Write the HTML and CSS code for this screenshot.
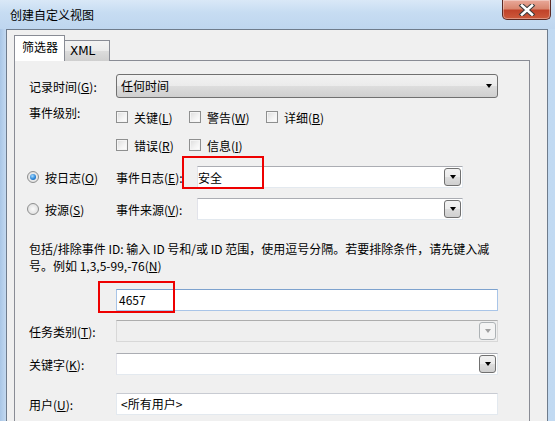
FILE: index.html
```html
<!DOCTYPE html>
<html>
<head>
<meta charset="utf-8">
<link rel="stylesheet" href="styles.css">
</head>
<body>
<div class="window">
  <div class="titlebar">
    <span class="title">创建自定义视图</span>
    <div class="close">
      <svg width="18" height="12" viewBox="0 0 18 12">
        <path d="M4 1.5 L14 10.5 M14 1.5 L4 10.5" stroke="#3a3a3a" stroke-width="4.6" stroke-linecap="square"/>
        <path d="M4 1.5 L14 10.5 M14 1.5 L4 10.5" stroke="#ffffff" stroke-width="2.6" stroke-linecap="square"/>
      </svg>
    </div>
  </div>
  <div class="client">
    <div class="tabs">
      <div class="tab active">筛选器</div>
      <div class="tab">XML</div>
    </div>
    <div class="panel">
      <div class="row r-time">
        <span class="label">记录时间(<u>G</u>):</span>
        <div class="combo">任何时间<span class="tri"></span></div>
      </div>

      <div class="levels">
        <span class="label lv-label">事件级别:</span>
        <div class="checks">
          <div class="checkrow">
            <span class="chk w73"><i class="box"></i>关键(<u>L</u>)</span>
            <span class="chk w77"><i class="box"></i>警告(<u>W</u>)</span>
            <span class="chk"><i class="box"></i>详细(<u>B</u>)</span>
          </div>
          <div class="checkrow second">
            <span class="chk w73"><i class="box"></i>错误(<u>R</u>)</span>
            <span class="chk w77"><i class="box"></i>信息(<u>I</u>)</span>
          </div>
        </div>
      </div>

      <div class="row r-log">
        <span class="radio-item"><i class="radio on"></i>按日志(<u>O</u>)</span>
        <span class="sublabel">事件日志(<u>E</u>):</span>
        <div class="dd">安全<span class="ddbtn"><span class="tri"></span></span></div>
      </div>

      <div class="row r-src">
        <span class="radio-item"><i class="radio"></i>按源(<u>S</u>)</span>
        <span class="sublabel">事件来源(<u>V</u>):</span>
        <div class="dd"><span class="ddbtn"><span class="tri"></span></span></div>
      </div>

      <p class="desc">包括/排除事件 ID: 输入 ID 号和/或 ID 范围，使用逗号分隔。若要排除条件，请先键入减<br>号。例如 1,3,5-99,-76(<u>N</u>)</p>

      <div class="row r-id">
        <div class="textbox focus">4657</div>
      </div>

      <div class="row r-task">
        <span class="label">任务类别(<u>T</u>):</span>
        <div class="dd wide disabled"><span class="ddbtn"><span class="tri"></span></span></div>
      </div>

      <div class="row r-key">
        <span class="label">关键字(<u>K</u>):</span>
        <div class="dd wide"><span class="ddbtn"><span class="tri"></span></span></div>
      </div>

      <div class="row r-user">
        <span class="label">用户(<u>U</u>):</span>
        <div class="textbox">&lt;所有用户&gt;</div>
      </div>

      <div class="mark mark1"></div>
      <div class="mark mark2"></div>
    </div>
  </div>
</div>
</body>
</html>
```

FILE: styles.css
```css
* { box-sizing: border-box; }
html, body { margin: 0; padding: 0; }
body {
  width: 555px;
  height: 421px;
  overflow: hidden;
  font-family: "Noto Sans CJK SC", "Noto Sans", sans-serif;
  font-size: 12px;
  color: #000;
}
u { text-decoration: underline; text-underline-offset: 1px; }

.window {
  width: 555px;
  height: 421px;
  display: flex;
  flex-direction: column;
  background: linear-gradient(90deg, #a9c6e6 0px, #c3d9f0 6px, #cfe2f5 40%, #bcd6f0 70%, #c2daf2 100%);
}
.titlebar {
  height: 29px;
  flex: none;
  display: flex;
  align-items: flex-start;
  background: linear-gradient(180deg, #d9e8f7 0%, #c6dcf2 45%, #bed6ef 100%);
}
.title {
  margin-left: 10px;
  margin-top: 6px;
  line-height: 18px;
  font-size: 12px;
  color: #000;
}
.close {
  margin-left: auto;
  margin-right: 4px;
  width: 49px;
  height: 20px;
  border: 1px solid #5b2a24;
  border-top: none;
  border-radius: 0 0 5px 5px;
  background: linear-gradient(180deg, #e9a99a 0%, #d98770 45%, #c1432a 55%, #cc5a3c 100%);
  display: flex;
  align-items: center;
  justify-content: center;
  box-shadow: inset 0 0 0 1px rgba(255,255,255,0.35);
}

.client {
  flex: 1;
  margin: 0 7px 0 6px;
  background: #f0f0f0;
  border: 1px solid #6f7c8c;
  border-bottom: none;
  display: flex;
  flex-direction: column;
  padding: 5px 17px 0 6px;
}
.tabs {
  display: flex;
  align-items: flex-end;
  height: 26px;
  flex: none;
  padding-left: 1px;
  margin-bottom: -1px;
  position: relative;
  z-index: 1;
}
.tab {
  height: 21px;
  padding: 0 6px;
  border: 1px solid #898c95;
  border-bottom: none;
  background: linear-gradient(180deg, #f3f3f3 0%, #ebebeb 50%, #dcdcdc 51%, #cfcfcf 100%);
  font-family: "DejaVu Sans", "Noto Sans CJK SC", sans-serif;
  font-size: 12px;
  line-height: 20px;
  width: 45px;
  padding-left: 5px;
  border-left: none;
}
.tab.active {
  height: 26px;
  width: 51px;
  background: #ffffff;
  border-left: 1px solid #898c95;
  font-family: "Noto Sans CJK SC", sans-serif;
  line-height: 22px;
  padding-left: 7px;
}
.panel {
  flex: 1;
  position: relative;
  border: 1px solid #898c95;
  border-bottom: none;
  margin-left: 1px;
  background: #f0f0f0;
  padding: 13px 0 0 12px;
}

.row {
  display: flex;
  align-items: center;
  height: 22px;
}
.label {
  width: 89px;
  padding-left: 2px;
  flex: none;
  white-space: nowrap;
}
.r-time { height: 24px; }
.combo {
  width: 382px;
  height: 24px;
  border: 1px solid #707070;
  border-radius: 3px;
  background: linear-gradient(180deg, #f2f2f2 0%, #ebebeb 50%, #dddddd 51%, #cfcfcf 100%);
  padding-left: 4px;
  line-height: 22px;
  position: relative;
  display: flex;
  align-items: center;
}
.combo .tri {
  margin-left: auto;
  margin-right: 5px;
}
.tri {
  display: block;
  width: 0;
  height: 0;
  border-left: 3.5px solid transparent;
  border-right: 3.5px solid transparent;
  border-top: 4px solid #000;
}

.levels {
  display: flex;
  margin-top: 10px;
}
.lv-label {
  line-height: 14px;
  margin-top: -2px;
  height: 14px;
}
.checks { display: flex; flex-direction: column; }
.checkrow {
  display: flex;
  align-items: center;
  height: 18px;
}
.checkrow.second { margin-top: 10px; }
.chk {
  display: flex;
  align-items: center;
  white-space: nowrap;
}
.w73 { width: 73px; }
.w77 { width: 77px; }
.box {
  width: 12px;
  height: 12px;
  border: 1px solid #8e8f8f;
  background: linear-gradient(135deg, #dcdcdc 0%, #f4f4f4 60%, #ffffff 100%);
  box-shadow: inset 0 0 0 1px #f4f4f4;
  margin-right: 6px;
  flex: none;
}

.r-log { margin-top: 12px; }
.r-src { margin-top: 10px; }
.radio-item {
  width: 89px;
  display: flex;
  align-items: center;
  white-space: nowrap;
  flex: none;
}
.radio {
  width: 12px;
  height: 12px;
  border-radius: 50%;
  border: 1px solid #8e8f8f;
  background: radial-gradient(circle at 50% 50%, #fbfbfb 0%, #e6e6e6 60%, #d0d0d0 100%);
  margin-right: 6px;
  flex: none;
  position: relative;
}
.radio.on::after {
  content: "";
  position: absolute;
  left: 2px; top: 2px;
  width: 6px; height: 6px;
  border-radius: 50%;
  background: radial-gradient(circle at 40% 35%, #a9dcff 0%, #2a86d8 55%, #0c4c9e 100%);
}
.sublabel {
  width: 81px;
  flex: none;
  white-space: nowrap;
}
.dd {
  width: 266px;
  height: 22px;
  background: #fff;
  border: 1px solid #e3e9ef;
  border-top-color: #abadb3;
  border-left-color: #e2e3ea;
  display: flex;
  align-items: center;
  padding-left: 0px;
}
.dd.wide { width: 382px; }
.dd.disabled { background: #efefef; border-color: #d8d8d8; border-top-color: #adadad; }
.ddbtn {
  margin-left: auto;
  margin-right: 1px;
  width: 17px;
  height: 18px;
  border: 1px solid #707070;
  border-radius: 3px;
  background: linear-gradient(180deg, #f2f2f2 0%, #ebebeb 50%, #dddddd 51%, #cfcfcf 100%);
  display: flex;
  align-items: center;
  justify-content: center;
}
.dd.disabled .ddbtn {
  border-color: #adb2b5;
  background: #f4f4f4;
}
.dd.disabled .tri { border-top-color: #a0a0a0; }

.desc {
  margin: 20px 0 0 2px;
  line-height: 17px;
  white-space: nowrap;
}

.r-id { margin-top: 15px; padding-left: 89px; }
.textbox {
  width: 382px;
  height: 22px;
  background: #fff;
  border: 1px solid #e3e9ef;
  border-top-color: #c8cbd2;
  padding-left: 2px;
  line-height: 20px;
}
.textbox.focus {
  border: 1px solid #a9c5e8;
  border-top-color: #7da2ce;
}
.r-task { margin-top: 9px; }
.r-key { margin-top: 11px; }
.r-user { margin-top: 18px; }
.r-user .textbox { padding-left: 4px; }

.mark {
  position: absolute;
  border: 2px solid #ee0000;
}
.mark1 { left: 167px; top: 95px; width: 82px; height: 33px; }
.mark2 { left: 83px; top: 220px; width: 77px; height: 32px; }
```
